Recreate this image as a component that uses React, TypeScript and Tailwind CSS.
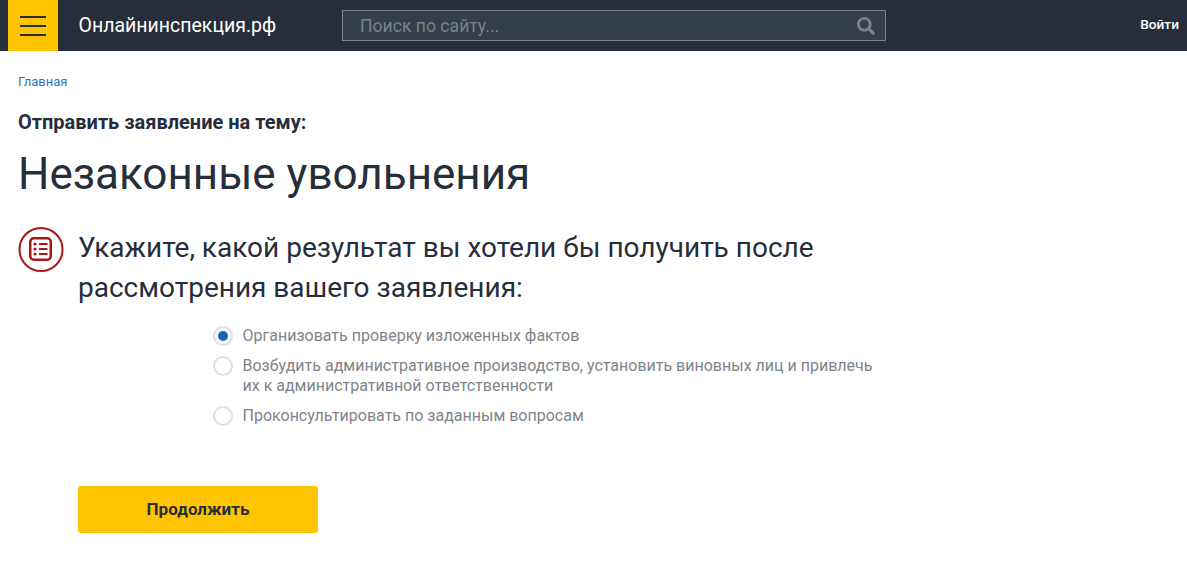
import { useState } from 'react';
import { FaSearch } from 'react-icons/fa';

const options = [
  'Организовать проверку изложенных фактов',
  'Возбудить административное производство, установить виновных лиц и привлечь их к административной ответственности',
  'Проконсультировать по заданным вопросам',
];

const ListIcon = () => (
  <svg width="46" height="46" viewBox="0 0 46 46" fill="none" className="shrink-0">
    <circle cx="23" cy="22.5" r="21.5" stroke="#a81616" strokeWidth="2" />
    <rect x="12.25" y="11.25" width="20.5" height="21.5" rx="3.5" stroke="#a81616" strokeWidth="2.5" />
    <circle cx="17" cy="17" r="1.6" fill="#a81616" />
    <circle cx="17" cy="22" r="1.6" fill="#a81616" />
    <circle cx="17" cy="27" r="1.6" fill="#a81616" />
    <path d="M21 17h8.5M21 22h8.5M21 27h8.5" stroke="#a81616" strokeWidth="2" />
  </svg>
);

export default function App() {
  const [selected, setSelected] = useState(0);

  return (
    <div className="min-h-[579px] bg-white font-['Roboto',sans-serif] text-[#272e3b]">
      <header className="flex h-[51px] items-center bg-[#272e3b]">
        <button className="ml-2 flex h-[51px] w-[50px] flex-col items-center justify-center gap-[7px] bg-[#ffc400]">
          <span className="h-[2px] w-[26px] bg-[#272e3b]"></span>
          <span className="h-[2px] w-[26px] bg-[#272e3b]"></span>
          <span className="h-[2px] w-[26px] bg-[#272e3b]"></span>
        </button>
        <a className="ml-[20.5px] w-[263.5px] pt-[1px] text-[19.5px] text-white">Онлайнинспекция.рф</a>
        <div className="flex h-[31px] w-[544px] items-center justify-between border border-[#7b8289] bg-[#353e4c] pl-[17px] pr-[10px]">
          <span className="pt-[1px] text-[17.6px] text-[#7b8289]">Поиск по сайту...</span>
          <FaSearch className="text-[18px] text-[#7b8289]" />
        </div>
        <a className="mb-[3px] ml-auto mr-2 text-[13.7px] font-medium text-white">Войти</a>
      </header>

      <main className="px-[18px]">
        <div className="pt-[23px] text-[13px] leading-[16px] text-[#2a74bd]">Главная</div>
        <div className="mt-[20px] text-[20px] font-bold leading-[24px]">Отправить заявление на тему:</div>
        <h1 className="mt-[13px] text-[44px] font-normal leading-[54px]">Незаконные увольнения</h1>

        <div className="mt-[26px] flex gap-[14px]">
          <ListIcon />
          <h2 className="w-[760px] pt-[1px] text-[28px] leading-[40px]">
            Укажите, какой результат вы хотели бы получить после рассмотрения вашего заявления:
          </h2>
        </div>

        <div className="ml-[195px] mt-[18px] flex w-[660px] flex-col gap-[10px]">
          {options.map((text, i) => (
            <label key={text} className="flex cursor-pointer gap-[9.5px]" onClick={() => setSelected(i)}>
              <span className="flex h-5 w-5 shrink-0 items-center justify-center rounded-full border-2 border-[#dcdfe3] bg-white">
                {selected === i && <span className="h-[10px] w-[10px] rounded-full bg-[#1565c0]"></span>}
              </span>
              <span className="text-[16px] leading-[20px] text-[#80848a]">{text}</span>
            </label>
          ))}
        </div>

        <button className="ml-[60px] mt-[60px] h-[47px] w-[240px] rounded-[3px] bg-[#ffc400] text-[17px] font-bold text-[#272e3b]">
          Продолжить
        </button>
      </main>
    </div>
  );
}
